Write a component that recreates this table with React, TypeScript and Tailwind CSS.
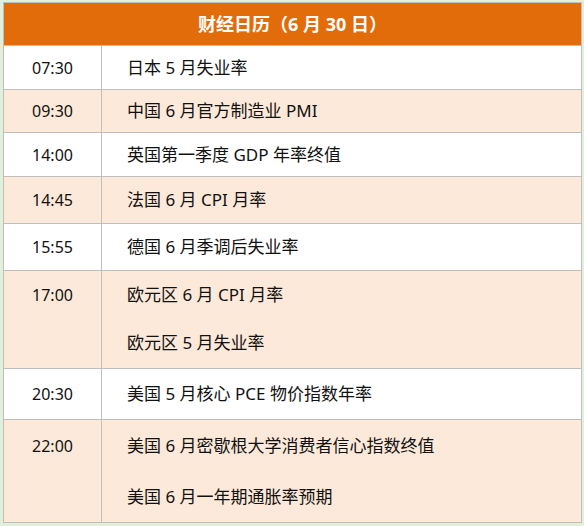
import React from 'react';

type Row = { time: string; items: string[]; h: string; line?: string; shade: boolean };

const rows: Row[] = [
  { time: '07:30', items: ['日本 5 月失业率'], h: 'h-[44px]', shade: false },
  { time: '09:30', items: ['中国 6 月官方制造业 PMI'], h: 'h-[43px]', shade: true },
  { time: '14:00', items: ['英国第一季度 GDP 年率终值'], h: 'h-[44px]', shade: false },
  { time: '14:45', items: ['法国 6 月 CPI 月率'], h: 'h-[47px]', shade: true },
  { time: '15:55', items: ['德国 6 月季调后失业率'], h: 'h-[47px]', shade: false },
  { time: '17:00', items: ['欧元区 6 月 CPI 月率', '欧元区 5 月失业率'], h: 'h-[98px]', line: 'h-[48px]', shade: true },
  { time: '20:30', items: ['美国 5 月核心 PCE 物价指数年率'], h: 'h-[51px]', shade: false },
  {
    time: '22:00',
    items: ['美国 6 月密歇根大学消费者信心指数终值', '美国 6 月一年期通胀率预期'],
    h: 'h-[103px]',
    line: 'h-[51px]',
    shade: true,
  },
];

const font = { fontFamily: '"Noto Sans", "Noto Sans CJK SC", sans-serif' };

const App: React.FC = () => {
  return (
    <div className="w-[584px] h-[526px] bg-[#e2efd9] pt-[2px] pl-[3px]" style={font}>
      <div className="w-[579px] border border-[#bfbfbf] text-[16px] text-[#111]">
        <div className="h-[42px] bg-[#e36c0a] flex items-center justify-center">
          <h1 className="text-[18px] font-bold text-white">财经日历（6 月 30 日）</h1>
        </div>
        {rows.map((r) => (
          <div
            key={r.time}
            className={`flex border-t border-[#bfbfbf] ${r.h} ${r.shade ? 'bg-[#fde9d9]' : 'bg-white'}`}
          >
            <div className="w-[97px] shrink-0 flex flex-col">
              {r.line ? (
                <div className={`${r.line} flex items-center justify-center`}>{r.time}</div>
              ) : (
                <div className="flex-1 flex items-center justify-center">{r.time}</div>
              )}
            </div>
            <div className="flex-1 border-l border-[#bfbfbf] pl-[25px] flex flex-col text-[17px]">
              {r.line ? (
                r.items.map((it) => (
                  <div key={it} className={`${r.line} flex items-center`}>
                    {it}
                  </div>
                ))
              ) : (
                <div className="flex-1 flex items-center">{r.items[0]}</div>
              )}
            </div>
          </div>
        ))}
      </div>
    </div>
  );
};

export default App;
